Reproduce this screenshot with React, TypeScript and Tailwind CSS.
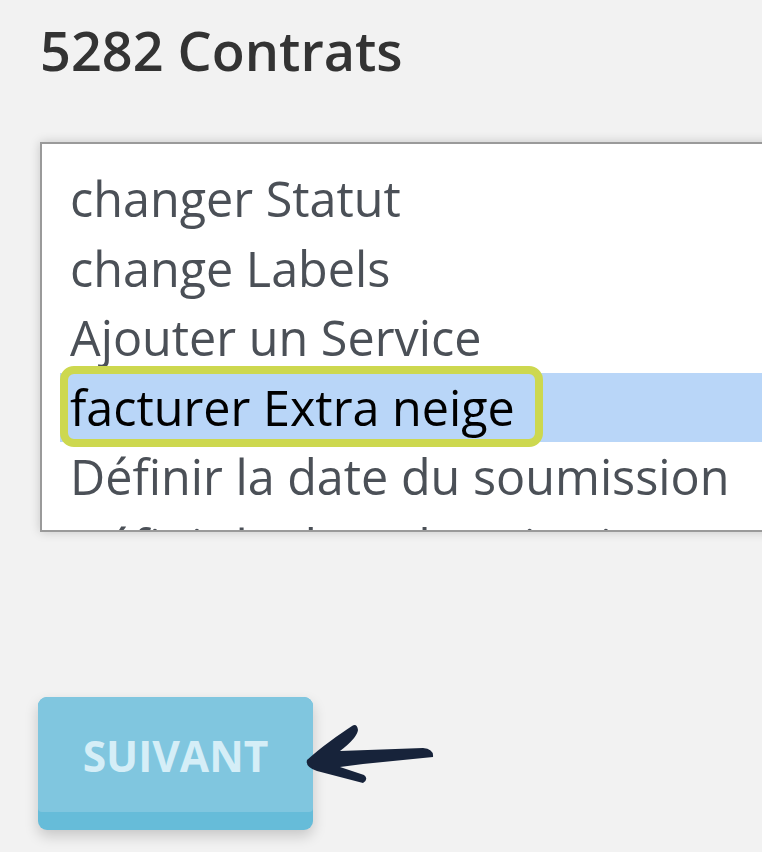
import React from "react";

const items = [
  "changer Statut",
  "change Labels",
  "Ajouter un Service",
  "facturer Extra neige",
  "Définir la date du soumission",
  "Définir la date d'expiration",
];

export default function App() {
  return (
    <div
      className="w-full h-[852px] overflow-hidden bg-[#f2f2f2] pl-[40px] pt-[17px]"
      style={{ fontFamily: '"Open Sans", "Noto Sans", sans-serif' }}
    >
      <h1 className="text-[54px] leading-[66px] font-semibold text-[#333333] whitespace-nowrap">
        5282 Contrats
      </h1>
      <div className="mt-[59px] w-[760px] h-[390px] border-2 border-[#9a9a9a] bg-white shadow-[0_0_10px_rgba(0,0,0,0.18)] overflow-hidden pt-[20px] pl-[18px]">
        <div className="flex flex-col">
          {items.map((t, i) => (
            <div
              key={t}
              className={
                "relative h-[69.5px] shrink-0 pl-[10px] text-[48.5px] leading-[69.5px] whitespace-nowrap " +
                (i === 3 ? "bg-[#b9d6f8] text-black" : "text-[#4b5057]")
              }
            >
              {t}
              {i === 3 && (
                <div className="absolute left-[0px] top-[-7px] w-[483px] h-[81px] rounded-[14px] border-[8px] border-[#cdd84f]" />
              )}
            </div>
          ))}
        </div>
      </div>
      <div className="relative mt-[165px] ml-[-2px] w-[275px] h-[133px] rounded-[9px] bg-[#66bcd9] shadow-[0_6px_14px_rgba(0,0,0,0.18)]">
        <div className="h-[115px] rounded-t-[9px] rounded-b-[4px] bg-[#80c6df] flex items-center justify-center">
          <span className="text-[42.5px] font-bold text-[#d5eef7] mt-[2px]">SUIVANT</span>
        </div>
        <svg
          className="absolute left-[262px] top-[21px]"
          width="140"
          height="80"
          viewBox="0 0 140 80"
        >
          <path
            d="M7 42 C20 30 40 16 52 8 Q57 5 58 12 Q57 20 40 33 L123 30 Q134 31 133 39 L63 46 L40 49 L64 57 Q69 61 63 65 L17 53 Q5 49 7 42 Z"
            fill="#17233a"
          />
        </svg>
      </div>
    </div>
  );
}
